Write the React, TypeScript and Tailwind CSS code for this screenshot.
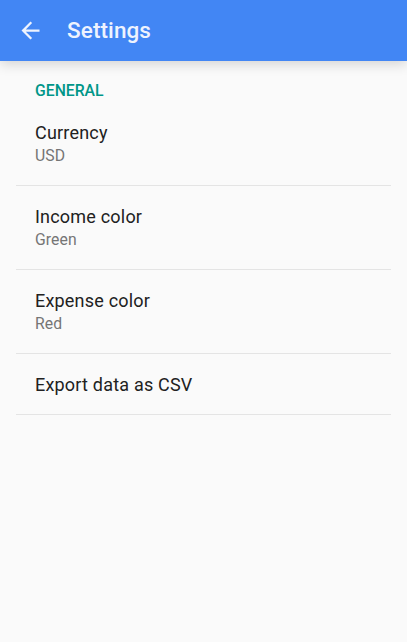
import React from 'react';

const items = [
  { title: 'Currency', summary: 'USD' },
  { title: 'Income color', summary: 'Green' },
  { title: 'Expense color', summary: 'Red' },
  { title: 'Export data as CSV' },
];

function BackArrow() {
  return (
    <svg width="27" height="27" viewBox="0 0 24 24" fill="currentColor">
      <path d="M20 11H7.83l5.59-5.59L12 4l-8 8 8 8 1.41-1.41L7.83 13H20v-2z" />
    </svg>
  );
}

export default function App() {
  return (
    <div
      className="w-[407px] h-[642px] bg-[#fafafa] flex flex-col overflow-hidden"
      style={{ fontFamily: 'Roboto, "Noto Sans", sans-serif' }}
    >
      {/* Toolbar */}
      <div className="relative z-10 h-[61px] bg-[#4286f4] flex items-center shadow-[0_3px_12px_rgba(0,0,0,0.16)]">
        <div className="pl-[17px] pr-[23px] text-[#eef3fe] flex items-center">
          <BackArrow />
        </div>
        <h1 className="text-[22.5px] font-medium text-[#eef3fe] tracking-[0.1px]">Settings</h1>
      </div>

      {/* Preference list */}
      <div className="mx-4">
        <div className="pt-[20px] pb-px pl-[19px] text-[15.75px] leading-[20px] font-medium text-[#009688]">
          GENERAL
        </div>
        {items.map((item) => (
          <div
            key={item.title}
            className={
              item.summary
                ? 'pt-[19px] pb-[18px] pl-[19px] border-b border-[#e4e4e4]'
                : 'pt-[19px] pb-[17px] pl-[19px] border-b border-[#e4e4e4]'
            }
          >
            <div className="text-[18px] leading-[24px] tracking-[0.2px] text-[#212121]">
              {item.title}
            </div>
            {item.summary && (
              <div className="text-[15.75px] leading-[22px] tracking-[0.1px] text-[#757575]">
                {item.summary}
              </div>
            )}
          </div>
        ))}
      </div>
    </div>
  );
}
